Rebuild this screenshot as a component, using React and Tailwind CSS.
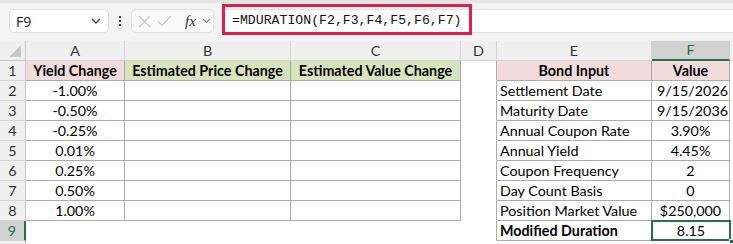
const G = "border-r-[#ababab]";
const GB = "border-b-[#ababab]";
const N = "border-r-transparent";
const NB = "border-b-transparent";

const widths = ["w-[99px]", "w-[166px]", "w-[170px]", "w-[36px]", "w-[155px]", "w-[78px]"];

const Cell = ({ w, r = N, b = NB, bg = "", align = "justify-center", bold = false, children }) => (
  <div
    className={`${w} h-[20px] shrink-0 border-r border-b ${r} ${b} ${bg} ${align} flex items-center overflow-visible whitespace-nowrap pt-[1px] ${bold ? "font-bold" : ""}`}
  >
    {children}
  </div>
);

const RowHead = ({ n, selected = false }) => (
  <div
    className={`w-[26px] h-[20px] shrink-0 flex items-center justify-center border-b border-b-[#d4d4d4] ${
      selected
        ? "bg-[#d2d2d2] text-[#217346] border-r-2 border-r-[#217346]"
        : "bg-[#f0f0f0] text-[#333] border-r border-r-[#c6c6c6]"
    }`}
  >
    {n}
  </div>
);

const yields = ["-1.00%", "-0.50%", "-0.25%", "0.01%", "0.25%", "0.50%", "1.00%"];
const bond = [
  ["Settlement Date", "9/15/2026", "justify-end pr-[1px]"],
  ["Maturity Date", "9/15/2036", "justify-end pr-[1px]"],
  ["Annual Coupon Rate", "3.90%", "justify-center"],
  ["Annual Yield", "4.45%", "justify-center"],
  ["Coupon Frequency", "2", "justify-center"],
  ["Day Count Basis", "0", "justify-center"],
  ["Position Market Value", "$250,000", "justify-center"],
];

function Toolbar() {
  return (
    <div className="relative h-[41px] bg-[#f3f3f3] border-t-[3px] border-t-[#e4e4e4] flex items-start pt-[6px] pl-[9px]">
      <div className="w-[100px] h-[24px] bg-white rounded-[5px] border border-[#e2e2e2] flex items-center pl-[6px] pr-[7px] justify-between">
        <span className="text-[14px] text-[#222] font-['Open_Sans',sans-serif]">F9</span>
        <svg width="10" height="6" viewBox="0 0 10 6"><path d="M1 1l4 4 4-4" fill="none" stroke="#444" strokeWidth="1.4" /></svg>
      </div>
      <div className="w-[22px] h-[24px] flex flex-col items-center justify-center gap-[2px]">
        <div className="w-[2px] h-[2px] bg-[#444]" />
        <div className="w-[2px] h-[2px] bg-[#444]" />
        <div className="w-[2px] h-[2px] bg-[#444]" />
      </div>
      <div className="w-[83px] h-[24px] bg-[#fafafa] rounded-[5px] border border-[#e2e2e2] flex items-center pl-[6px] gap-[6px]">
        <svg width="13" height="13" viewBox="0 0 13 13"><path d="M1 1l11 11M12 1L1 12" stroke="#c8c8c8" strokeWidth="1.2" /></svg>
        <svg width="15" height="12" viewBox="0 0 15 12"><path d="M1 6.5l4 4L14 1" fill="none" stroke="#c8c8c8" strokeWidth="1.2" /></svg>
        <span className="ml-[7px] text-[15px] italic text-[#333] font-['Liberation_Serif',serif] leading-none">fx</span>
        <svg width="9" height="6" viewBox="0 0 9 6"><path d="M1 1l3.5 3.5L8 1" fill="none" stroke="#888" strokeWidth="1.1" /></svg>
      </div>
      <div className="ml-[8px] flex-1 h-[24px] bg-white border border-r-0 border-[#e2e2e2] rounded-l-[4px] flex items-center pl-[9px]">
        <span className="text-[13.2px] text-[#111] font-['Liberation_Mono',monospace]">=MDURATION(F2,F3,F4,F5,F6,F7)</span>
      </div>
      <div className="absolute left-[222px] top-[1px] w-[250px] h-[31px] border-[3px] border-[#e31c4c]" />
    </div>
  );
}

function ColHeads() {
  const cols = ["A", "B", "C", "D", "E", "F"];
  return (
    <div className="flex h-[20px]">
      <div className="w-[26px] h-[20px] shrink-0 bg-[#f0f0f0] border-r border-b border-[#c6c6c6] flex items-end justify-end pr-[4px] pb-[3px]">
        <svg width="12" height="12" viewBox="0 0 12 12"><path d="M12 0L12 12L0 12Z" fill="#c8c8c8" /></svg>
      </div>
      {cols.map((c, i) =>
        c === "F" ? (
          <div key={c} className={`${widths[i]} h-[20px] shrink-0 bg-[#d2d2d2] border-r border-r-[#c6c6c6] border-b-2 border-b-[#217346] text-[#217346] flex items-center justify-center`}>
            {c}
          </div>
        ) : (
          <div key={c} className={`${widths[i]} h-[20px] shrink-0 bg-[#f0f0f0] border-r border-b border-[#d4d4d4] text-[#333] flex items-center justify-center`}>
            {c}
          </div>
        )
      )}
      <div className="flex-1 h-[20px] bg-[#f0f0f0] border-b border-[#d4d4d4]" />
    </div>
  );
}

export default function App() {
  return (
    <div className="w-[733px] h-[244px] overflow-hidden bg-white font-['Lato',sans-serif] text-[14.3px] text-black">
      <Toolbar />
      <ColHeads />
      <div className="flex">
        <RowHead n={1} />
        <Cell w={widths[0]} r={G} b={GB} bg="bg-[#f2dcdb]" bold>Yield Change</Cell>
        <Cell w={widths[1]} r={G} b={GB} bg="bg-[#d8e4bc]" bold>Estimated Price Change</Cell>
        <Cell w={widths[2]} r={G} b={GB} bg="bg-[#d8e4bc]" bold>Estimated Value Change</Cell>
        <Cell w={widths[3]} r={G} />
        <Cell w={widths[4]} r={G} b={GB} bg="bg-[#f2dcdb]" bold>Bond Input</Cell>
        <Cell w={widths[5]} r={G} b={GB} bg="bg-[#f2dcdb]" bold>Value</Cell>
      </div>
      {yields.map((y, i) => (
        <div key={y} className="flex">
          <RowHead n={i + 2} />
          <Cell w={widths[0]} r={G} b={GB}>{y}</Cell>
          <Cell w={widths[1]} r={G} b={GB} />
          <Cell w={widths[2]} r={G} b={GB} />
          <Cell w={widths[3]} r={G} />
          <Cell w={widths[4]} r={G} b={GB} align="justify-start pl-[3px]">{bond[i][0]}</Cell>
          <Cell w={widths[5]} r={G} b={GB} align={bond[i][2]}>{bond[i][1]}</Cell>
        </div>
      ))}
      <div className="flex">
        <RowHead n={9} selected />
        <Cell w={widths[0]} />
        <Cell w={widths[1]} />
        <Cell w={widths[2]} />
        <Cell w={widths[3]} r={G} />
        <Cell w={widths[4]} r={G} b={GB} align="justify-start pl-[3px]" bold>Modified Duration</Cell>
        <div className="relative w-[78px] h-[20px] shrink-0 border-b border-b-[#ababab]">
          <div className="absolute left-[-1px] top-[-1px] w-[80px] h-[21px] border-2 border-[#217346] flex items-center justify-center pt-[1px]">8.15</div>
          <div className="absolute right-[-4px] bottom-[-4px] w-[5px] h-[5px] bg-[#217346] border border-white" />
        </div>
      </div>
      <div className="flex">
        <div className="w-[26px] h-[20px] shrink-0 bg-[#f0f0f0] border-r border-r-[#c6c6c6]" />
      </div>
    </div>
  );
}
